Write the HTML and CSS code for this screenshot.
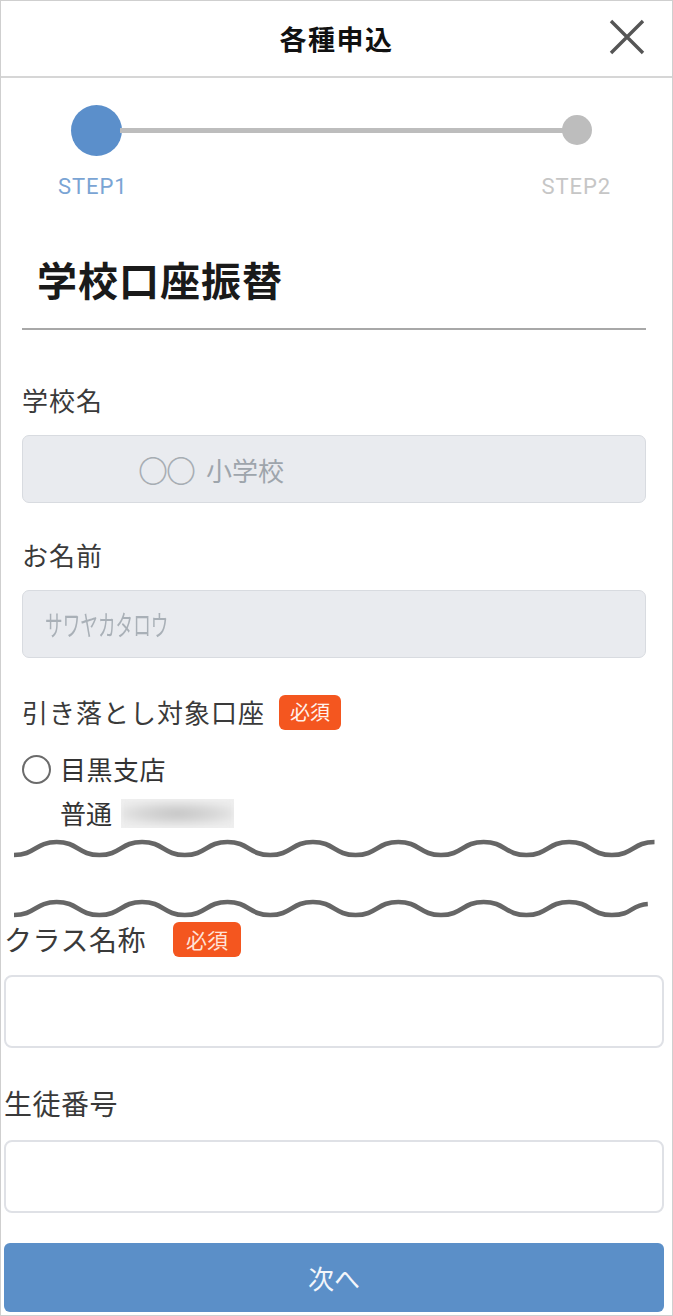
FILE: index.html
```html
<!DOCTYPE html>
<html lang="ja">
<head>
<meta charset="utf-8">
<title>各種申込</title>
<link rel="stylesheet" href="styles.css">
</head>
<body>
<div class="frame">
  <header class="topbar">
    <div class="topbar-title">各種申込</div>
    <button class="close" aria-label="閉じる">
      <svg width="38" height="38" viewBox="0 0 38 38"><path d="M3 3 L35 35 M35 3 L3 35" stroke="#555" stroke-width="3.4" stroke-linecap="butt" fill="none"/></svg>
    </button>
  </header>

  <div class="stepper">
    <div class="track">
      <span class="dot dot-active"></span>
      <span class="rail"></span>
      <span class="dot dot-next"></span>
    </div>
    <div class="step-labels">
      <span class="step-label step-active">STEP1</span>
      <span class="step-label step-next">STEP2</span>
    </div>
  </div>

  <div class="content">
    <h1 class="page-title">学校口座振替</h1>

    <div class="field-label first">学校名</div>
    <div class="input input-readonly input-school"><span class="circles">〇〇</span>小学校</div>

    <div class="field-label">お名前</div>
    <div class="input input-readonly input-name"><span class="kana">サワヤカタロウ</span></div>

    <div class="field-label label-row account-label">引き落とし対象口座<span class="badge">必須</span></div>
    <div class="radio-row">
      <span class="radio"></span>
      <span class="radio-text">目黒支店</span>
    </div>
    <div class="account-row">
      <span class="account-type">普通</span>
      <span class="masked"><span class="masked-blob"></span></span>
    </div>
  </div>

  <svg class="break" width="671" height="90" viewBox="0 0 671 90">
    <path d="M13 24 c21.3 0 21.3 -13 42.7 -13 s21.3 13 42.7 13 s21.3 -13 42.7 -13 s21.3 13 42.7 13 s21.3 -13 42.7 -13 s21.3 13 42.7 13 s21.3 -13 42.7 -13 s21.3 13 42.7 13 s21.3 -13 42.7 -13 s21.3 13 42.7 13 s21.3 -13 42.7 -13 s21.3 13 42.7 13 s21.3 -13 42.7 -13 s21.3 13 42.7 13 s21.3 -13 42.7 -13" stroke="#666" stroke-width="4.6" fill="none"/>
    <path d="M13 84 c21.3 0 21.3 -13 42.7 -13 s21.3 13 42.7 13 s21.3 -13 42.7 -13 s21.3 13 42.7 13 s21.3 -13 42.7 -13 s21.3 13 42.7 13 s21.3 -13 42.7 -13 s21.3 13 42.7 13 s21.3 -13 42.7 -13 s21.3 13 42.7 13 s21.3 -13 42.7 -13 s21.3 13 42.7 13 s21.3 -13 42.7 -13 s21.3 13 42.7 13 s18 -10 36 -11" stroke="#666" stroke-width="4.6" fill="none"/>
  </svg>

  <div class="lower">
    <div class="field-label big label-row">クラス名称<span class="badge badge-big">必須</span></div>
    <div class="input input-empty"></div>

    <div class="field-label big student-label">生徒番号</div>
    <div class="input input-empty"></div>

    <button class="next">次へ</button>
  </div>
</div>
</body>
</html>
```

FILE: styles.css
```css
* {
  box-sizing: border-box;
}

html, body {
  margin: 0;
  padding: 0;
  background: #fff;
}

body {
  font-family: "Noto Sans CJK JP", "Noto Sans", sans-serif;
  color: #333;
}

.frame {
  width: 673px;
  height: 1316px;
  border: 1px solid #cfcfcf;
  overflow: hidden;
  background: #fff;
}

/* header */
.topbar {
  height: 77px;
  border-bottom: 2px solid #d6d6d6;
  display: grid;
  grid-template-columns: 1fr auto 1fr;
  align-items: center;
}

.topbar-title {
  grid-column: 2;
  font-size: 27px;
  font-weight: bold;
  letter-spacing: 1.5px;
  color: #111;
  line-height: 73px;
}

.close {
  grid-column: 3;
  justify-self: end;
  margin-right: 26px;
  margin-top: -4px;
  padding: 0;
  border: 0;
  background: none;
  width: 38px;
  height: 38px;
  display: flex;
}

/* stepper */
.stepper {
  padding-top: 27px;
}

.track {
  display: flex;
  align-items: center;
  padding-left: 70px;
  height: 50px;
}

.dot {
  display: block;
  border-radius: 50%;
  flex: none;
}

.dot-active {
  width: 51px;
  height: 51px;
  background: #5b8fcb;
}

.rail {
  display: block;
  width: 444px;
  height: 5px;
  margin: 0 -2px;
  background: #bdbdbd;
}

.dot-next {
  width: 30px;
  height: 30px;
  background: #bdbdbd;
}

.step-labels {
  display: flex;
  justify-content: space-between;
  padding: 0 61px 0 57px;
  margin-top: 20px;
}

.step-label {
  font-family: Roboto, "Liberation Sans", sans-serif;
  font-size: 22px;
  line-height: 24px;
  letter-spacing: 0.9px;
}

.step-active {
  color: #7aa4d4;
}

.step-next {
  color: #c6c6c6;
}

/* content */
.content {
  padding: 0 26px 0 21px;
}

.page-title {
  margin: 56px 0 0;
  padding: 0 0 25px 15px;
  font-size: 40px;
  line-height: 48px;
  letter-spacing: 1px;
  font-weight: bold;
  color: #1a1a1a;
  border-bottom: 2px solid #a8a8a8;
}

.field-label {
  font-size: 26px;
  line-height: 36px;
  letter-spacing: 1px;
  color: #3a3a3a;
  margin-top: 34px;
  margin-bottom: 17px;
}

.field-label.first {
  margin-top: 52px;
}

.label-row {
  display: flex;
  align-items: center;
}

.account-label {
  margin-top: 36px;
  margin-bottom: 0;
}

.badge {
  display: inline-flex;
  align-items: center;
  justify-content: center;
  width: 62px;
  height: 35px;
  margin-left: 14px;
  border-radius: 6px;
  background: #f4561f;
  color: #fff2ec;
  font-size: 20px;
  letter-spacing: 0;
  line-height: 1;
}

.input {
  height: 68px;
  border-radius: 7px;
  display: flex;
  align-items: center;
}

.input-readonly {
  background: #e9ebef;
  border: 1.5px solid #d8dbe0;
  color: #9ea5ac;
}

.input-school {
  padding-left: 115px;
  font-size: 26px;
}

.circles {
  font-size: 30px;
  letter-spacing: -2px;
  margin-right: 12px;
  color: #a7adb3;
  font-weight: 300;
}

.input-name {
  padding-left: 22px;
}

.kana {
  display: inline-block;
  font-size: 28px;
  transform: scaleX(0.63);
  transform-origin: left center;
  color: #a9b0b7;
  white-space: nowrap;
}

.radio-row {
  display: flex;
  align-items: center;
  height: 36px;
  margin-top: 21px;
}

.radio {
  width: 29px;
  height: 29px;
  border: 2.5px solid #6b6b6b;
  border-radius: 50%;
  flex: none;
}

.radio-text {
  margin-left: 9px;
  font-size: 26px;
  line-height: 36px;
  letter-spacing: 0.5px;
  color: #333;
}

.account-row {
  display: flex;
  align-items: center;
  height: 36px;
  margin-top: 8px;
  padding-left: 38px;
}

.account-type {
  font-size: 26px;
  line-height: 36px;
  color: #333;
}

.masked {
  display: block;
  width: 113px;
  height: 29px;
  margin-left: 9px;
  background: #f1f1f1;
  overflow: hidden;
}

.masked-blob {
  display: block;
  width: 100%;
  height: 100%;
  background: radial-gradient(ellipse 60% 45% at 50% 50%, #c4c4c4, #d9d9d9 60%, #ececec 100%);
  filter: blur(3px);
}

/* break marker */
.break {
  display: block;
}

/* lower section */
.lower {
  padding: 0 8px 0 3px;
}

.field-label.big {
  font-size: 28px;
  letter-spacing: 0.5px;
  margin-top: 0;
  margin-bottom: 18px;
}

.badge-big {
  width: 68px;
  margin-left: 27px;
  font-size: 21px;
  color: #ffe3d8;
}

.student-label {
  margin-top: 37px !important;
  margin-bottom: 19px !important;
}

.input-empty {
  height: 73px;
  background: #fff;
  border: 2px solid #dfe1e6;
  border-radius: 8px;
}

.next {
  display: block;
  width: 100%;
  height: 69px;
  margin-top: 30px;
  border: 0;
  border-radius: 6px;
  background: #5b8fc8;
  color: #f3f6fb;
  font-family: "Noto Sans CJK JP", sans-serif;
  font-size: 26px;
}
```
